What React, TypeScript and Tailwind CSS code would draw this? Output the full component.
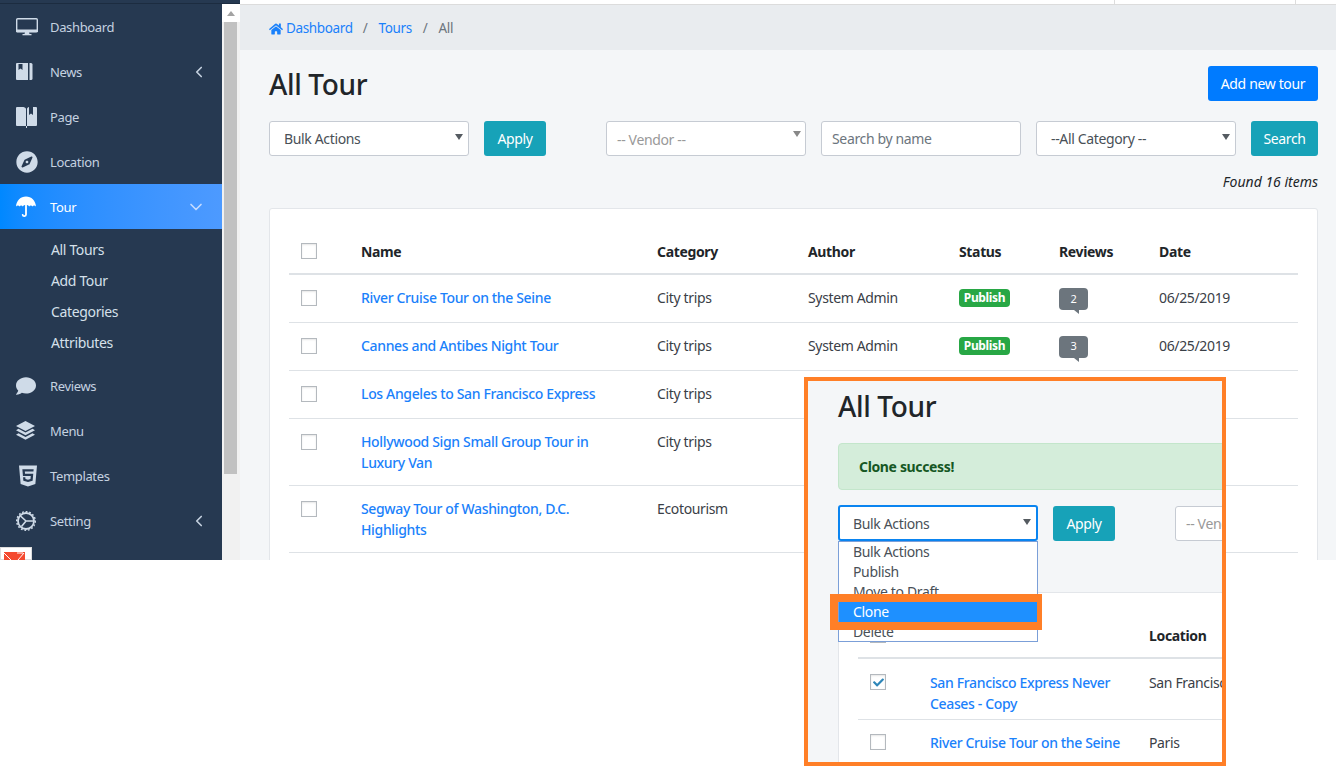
import { ChevronLeft, ChevronDown } from 'lucide-react';
import { FaHome, FaCompass, FaHtml5, FaComment, FaCheck } from 'react-icons/fa';

function DesktopIcon() {
  return (
    <svg width="22" height="18" viewBox="0 0 22 18" className="text-[#cfdbe8]">
      <rect x="0.7" y="0.7" width="20.6" height="13" rx="1" fill="none" stroke="currentColor" strokeWidth="1.4" />
      <rect x="0" y="11.5" width="22" height="2.6" fill="currentColor" />
      <path d="M9 14h4l.5 2.2H8.500z" fill="currentColor" />
      <rect x="6.500" y="16" width="9" height="1.300" fill="currentColor" />
    </svg>
  );
}

function BookIcon() {
  return (
    <svg width="17" height="17" viewBox="0 0 17 17">
      <path d="M1 0h11v17H1a1 1 0 0 1-1-1V1a1 1 0 0 1 1-1z" fill="#cfdbe8" />
      <path d="M2.500 1h4v6L4.500 5.500 2.500 7z" fill="#263951" />
      <path d="M13.500 0H15a1.500 1.500 0 0 1 1.500 1.500v14A1.500 1.500 0 0 1 15 17h-1.500z" fill="#cfdbe8" />
    </svg>
  );
}

function OpenBookIcon() {
  return (
    <svg width="21" height="22" viewBox="0 0 21 22">
      <path d="M1 1h5c2 0 3.800.6 4 2v17H1a1 1 0 0 1-1-1V2a1 1 0 0 1 1-1z" fill="#cfdbe8" />
      <path d="M11 3c.1-1 .9-1.700 2-2v8l2-1.500L17 9V1h3a1 1 0 0 1 1 1v17a1 1 0 0 1-1 1h-9z" fill="#cfdbe8" />
      <rect x="10" y="20" width="1" height="2" fill="#cfdbe8" />
    </svg>
  );
}

function UmbrellaIcon() {
  return (
    <svg width="20" height="22" viewBox="0 0 20 22">
      <path d="M10 0.500C15.500 0.500 19.500 4.500 20 10.500c-1.200-1.400-2.800-1.400-3.500 0-.8-1.400-2.500-1.400-3.300 0-.7-1.300-1.800-1.600-3.200-1.600s-2.500.3-3.200 1.600c-.8-1.400-2.500-1.400-3.300 0-.7-1.400-2.300-1.400-3.500 0C.5 4.500 4.500.5 10 .5z" fill="#fff" />
      <path d="M10 9v9.500c0 2-3 2.200-3.300.3" fill="none" stroke="#fff" strokeWidth="1.800" strokeLinecap="round" />
    </svg>
  );
}

function LayersIcon() {
  return (
    <svg width="19" height="19" viewBox="0 0 19 19" fill="#cfdbe8">
      <path d="M9.500 0l9.500 5-9.500 5L0 5z" />
      <path d="M2.500 7.800l7 3.700 7-3.700 2.500 1.400-9.500 5L0 9.200z" />
      <path d="M2.500 12.300l7 3.700 7-3.700 2.500 1.400-9.500 5L0 13.700z" />
    </svg>
  );
}

function GearIcon() {
  return (
    <svg width="20" height="20" viewBox="0 0 20 20" fill="none" stroke="#cfdbe8">
      <circle cx="10" cy="10" r="8" strokeWidth="1.800" />
      <circle cx="10" cy="10" r="9.300" strokeWidth="1.400" strokeDasharray="1.800 1.800" />
      <path d="M10 10L4.500 5M10 10l7 0M10 10l-4.500 5.500" strokeWidth="1.600" />
    </svg>
  );
}

function Arrow({ color = 'border-t-[#555b61]' }: { color?: string }) {
  return <span className={`block w-0 h-0 border-x-[4px] border-x-transparent border-t-[6px] ${color}`} />;
}

function Checkbox({ checked }: { checked?: boolean }) {
  return (
    <span className="w-4 h-4 border border-[#b4b9be] flex items-center justify-center bg-white shadow-[inset_0_1px_2px_rgba(0,0,0,0.1)]">
      {checked && <FaCheck className="text-[#2e86b8] text-[11px]" />}
    </span>
  );
}

function NavItem({ icon, label, chevron }: { icon: React.ReactNode; label: string; chevron?: boolean }) {
  return (
    <div className="h-[45px] flex items-center text-[#c5d2e0] text-[13px]">
      <span className="w-[50px] pl-4 flex items-center">{icon}</span>
      <span className="flex-1 pt-[3px]">{label}</span>
      {chevron && <ChevronLeft className="w-[18px] h-[18px] mr-[14px]" strokeWidth={2.2} />}
    </div>
  );
}

function Sidebar() {
  return (
    <aside className="relative w-[222px] h-[560px] shrink-0 bg-[#263951] pt-1 overflow-hidden">
      <NavItem icon={<DesktopIcon />} label="Dashboard" />
      <NavItem icon={<BookIcon />} label="News" chevron />
      <NavItem icon={<OpenBookIcon />} label="Page" />
      <NavItem icon={<FaCompass className="text-[22px] text-[#cfdbe8]" />} label="Location" />
      <div className="h-[45px] flex items-center text-white text-[13px] bg-linear-to-r from-[#0088ff] to-[#4d9aff]">
        <span className="w-[50px] pl-4 flex items-center"><UmbrellaIcon /></span>
        <span className="flex-1 pt-[3px]">Tour</span>
        <ChevronDown className="w-5 h-5 mr-4 text-[#c5dcff]" strokeWidth={2} />
      </div>
      <div className="pt-[5px] pb-[5px] pl-[51px] text-[#d5e0ea]">
        <div className="h-[31px] leading-[31px]">All Tours</div>
        <div className="h-[31px] leading-[31px]">Add Tour</div>
        <div className="h-[31px] leading-[31px]">Categories</div>
        <div className="h-[31px] leading-[31px]">Attributes</div>
      </div>
      <NavItem icon={<FaComment className="text-[20px] text-[#cfdbe8]" />} label="Reviews" />
      <NavItem icon={<LayersIcon />} label="Menu" />
      <NavItem icon={<FaHtml5 className="text-[24px] text-[#cfdbe8]" />} label="Templates" />
      <NavItem icon={<GearIcon />} label="Setting" chevron />
      <div className="absolute left-0 top-[547px] w-8 h-[13px] bg-white border border-[#ddd] pl-[3px] pt-1">
        <svg width="21" height="8" viewBox="0 0 21 8">
          <rect width="21" height="8" fill="#f4492f" />
          <path d="M0 1l7 7M14 8l6-7M13 1h6" stroke="#fff" strokeWidth="1" />
        </svg>
      </div>
    </aside>
  );
}

function Scrollbar() {
  return (
    <div className="w-[18px] shrink-0 bg-[#f1f1f1] flex flex-col">
      <div className="h-[22px] bg-white pt-[11px] pl-[5px]">
        <div className="w-0 h-0 border-x-[4px] border-x-transparent border-b-[5px] border-b-[#a3a3a3]" />
      </div>
      <div className="w-[13px] ml-0.5 h-[452px] bg-[#c1c1c1]" />
    </div>
  );
}

function BulkSelect({ focus }: { focus?: boolean }) {
  return (
    <div className={`w-[200px] h-[35px] flex items-center justify-between pr-[5px] bg-white text-[#495057] rounded-[3px] ${focus ? 'h-[36px] pl-[13px] pt-px border-2 border-[#0a84f0]' : 'pl-[14px] border border-[#c6cbd3]'}`}>
      <span>Bulk Actions</span>
      <span className="-mt-1"><Arrow /></span>
    </div>
  );
}

function Badge({ n }: { n: number }) {
  return (
    <div className="relative w-[29px] h-[22px] rounded-[4px] bg-[#6c757d] text-white text-[11px] flex items-center justify-center">
      {n}
      <span className="absolute left-[15px] top-[22px] w-0 h-0 border-l-[5px] border-l-transparent border-t-[4px] border-t-[#6c757d]" />
    </div>
  );
}

const rows = [
  { name: 'River Cruise Tour on the Seine', category: 'City trips', meta: true, n: 2 },
  { name: 'Cannes and Antibes Night Tour', category: 'City trips', meta: true, n: 3 },
  { name: 'Los Angeles to San Francisco Express', category: 'City trips' },
  { name: 'Hollywood Sign Small Group Tour in Luxury Van', category: 'City trips' },
  { name: 'Segway Tour of Washington, D.C. Highlights', category: 'Ecotourism' },
];

function TourTable() {
  return (
    <table className="w-[1009px] table-fixed border-collapse">
      <thead>
        <tr className="h-[45px] border-b-2 border-[#dee2e6] text-left text-[#212529] font-bold">
          <th className="w-[60px] pl-3 align-middle"><Checkbox /></th>
          <th className="w-[296px] pl-3 font-bold">Name</th>
          <th className="w-[151px] pl-3 font-bold">Category</th>
          <th className="w-[151px] pl-3 font-bold">Author</th>
          <th className="w-[100px] pl-3 font-bold">Status</th>
          <th className="w-[100px] pl-3 font-bold">Reviews</th>
          <th className="pl-3 font-bold">Date</th>
        </tr>
      </thead>
      <tbody>
        {rows.map((r) => (
          <tr key={r.name} className="h-[48px] border-b border-[#dee2e6] align-top text-[#3a4047]">
            <td className="pl-3 pt-[15px]"><Checkbox /></td>
            <td className="pl-3 pr-[48px] pt-[12px] pb-[12px] leading-[21px] font-medium text-[#1a81fb]">{r.name}</td>
            <td className="px-3 pt-[12px] leading-[21px]">{r.category}</td>
            <td className="px-3 pt-[12px] leading-[21px]">{r.meta && 'System Admin'}</td>
            <td className="px-3 pt-[12px] leading-[21px]">
              {r.meta && <span className="block w-[51px] h-[18px] mt-[2px] rounded-[4px] bg-[#28a745] text-white text-[12px] font-bold leading-[18px] text-center">Publish</span>}
            </td>
            <td className="px-3 pt-[13px]">{r.n && <Badge n={r.n} />}</td>
            <td className="px-3 pt-[12px] leading-[21px]">{r.meta && '06/25/2019'}</td>
          </tr>
        ))}
      </tbody>
    </table>
  );
}

function CloneCallout() {
  return (
    <div className="absolute left-[804px] top-[377px] w-[422px] h-[389px] border-4 border-[#ff7f27] bg-[#f4f6f8] overflow-hidden">
      <div className="pl-[30px] pt-[8px] w-[800px]">
        <h1 className="text-[28px] leading-[34px] font-medium text-[#212529]">All Tour</h1>
        <div className="mt-[20px] h-[47px] pl-5 flex items-center rounded-[4px] bg-[#d4edda] border border-[#c3e6cb] text-[#155724] font-bold">
          Clone success!
        </div>
        <div className="mt-[15px] h-[36px] flex items-start">
          <BulkSelect focus />
          <div className="ml-[15px] mt-px w-[62px] h-[35px] rounded-[3px] bg-[#17a2b8] text-white flex items-center justify-center">Apply</div>
          <div className="ml-[60px] mt-px w-[200px] h-[35px] pl-[10px] flex items-center bg-white border border-[#c6cbd3] rounded-[3px] text-[#999]">-- Vendor --</div>
        </div>
        <div className="mt-[51px] h-[300px] bg-white border border-[#e3e6ea] pl-[19px] pt-[32px] w-[800px]">
          <div className="h-[34px] border-b-2 border-[#dee2e6] flex">
            <span className="w-[72px] pl-3 pt-0.5"><Checkbox /></span>
            <span className="w-[219px]" />
            <span className="font-bold text-[#212529]">Location</span>
          </div>
          <div className="h-[61px] border-b border-[#dee2e6] flex pt-[13px] leading-[21px]">
            <span className="w-[72px] pl-3 pt-0.5"><Checkbox checked /></span>
            <span className="w-[219px] font-medium text-[#1a81fb] pr-3">San Francisco Express Never Ceases - Copy</span>
            <span className="text-[#3a4047]">San Francisco</span>
          </div>
          <div className="flex pt-[12px] leading-[21px]">
            <span className="w-[72px] pl-3 pt-0.5"><Checkbox /></span>
            <span className="w-[219px] font-medium text-[#1a81fb] whitespace-nowrap">River Cruise Tour on the Seine</span>
            <span className="text-[#3a4047]">Paris</span>
          </div>
        </div>
      </div>
      <div className="absolute left-[30px] top-[160px] w-[200px] h-[101px] bg-white border border-[#7b9fd8] text-[#495057] leading-5">
        <div className="h-5 pl-[14px]">Bulk Actions</div>
        <div className="h-5 pl-[14px]">Publish</div>
        <div className="h-5 pl-[14px]">Move to Draft</div>
        <div className="h-5 pl-[14px] bg-[#1e90ff] text-white">Clone</div>
        <div className="h-5 pl-[14px]">Delete</div>
      </div>
      <div className="absolute left-[22px] top-[213px] w-[212px] h-9 border-y-8 border-l-8 border-r-[5px] border-[#ff7f27]" />
    </div>
  );
}

export default function App() {
  return (
    <div className="relative w-[1336px] h-[781px] overflow-hidden bg-white font-['Noto_Sans',sans-serif] text-[14px] tracking-[-0.025em]">
      <div className="flex h-[560px] overflow-hidden">
        <Sidebar />
        <Scrollbar />
        <main className="flex-1 bg-[#f4f6f8] min-w-0">
          <div className="h-[5px] bg-white border-b border-[#dcdcdc] relative">
            <span className="absolute left-[874px] top-0 w-px h-1 bg-[#ddd]" />
            <span className="absolute left-[1055px] top-0 w-px h-1 bg-[#ddd]" />
          </div>
          <nav className="h-[45px] bg-[#e9ecef] pl-[29px] pt-0.5 flex items-center text-[#6c757d] text-[13.5px]">
            <FaHome className="text-[#1a81fb] text-[14px] mr-[3px]" />
            <span className="text-[#1a81fb]">Dashboard</span>
            <span className="ml-[10px] mr-[11px]">/</span>
            <span className="text-[#1a81fb]">Tours</span>
            <span className="mx-[11px]">/</span>
            <span>All</span>
          </nav>
          <div className="pl-[29px] pr-[18px]">
            <div className="flex items-start justify-between pt-4">
              <h1 className="text-[28px] leading-[36px] font-medium text-[#212529]">All Tour</h1>
              <div className="w-[110px] h-[35px] rounded-[3px] bg-[#007bff] text-white flex items-center justify-center">Add new tour</div>
            </div>
            <div className="mt-[19px] flex">
              <BulkSelect />
              <div className="ml-[15px] w-[62px] h-[35px] rounded-[3px] bg-[#17a2b8] text-white flex items-center justify-center">Apply</div>
              <div className="ml-[60px] w-[200px] h-[35px] flex items-center justify-between pl-[10px] pr-[4px] bg-white border border-[#c6cbd3] rounded-[3px] text-[#999]">
                <span className="pt-0.5">-- Vendor --</span>
                <span className="-mt-2.5"><Arrow color="border-t-[#888]" /></span>
              </div>
              <input placeholder="Search by name" className="ml-[15px] w-[200px] h-[35px] pl-[10px] bg-white border border-[#c6cbd3] rounded-[3px] text-[#495057] placeholder:text-[#6c757d]" />
              <div className="ml-[15px] w-[200px] h-[35px] flex items-center justify-between pl-[14px] pr-[5px] bg-white border border-[#c6cbd3] rounded-[3px] text-[#495057]">
                <span>--All Category --</span>
                <span className="-mt-1"><Arrow /></span>
              </div>
              <div className="ml-[15px] w-[67px] h-[35px] rounded-[3px] bg-[#17a2b8] text-white flex items-center justify-center">Search</div>
            </div>
            <div className="mt-[15px] h-[22px] text-right italic tracking-normal text-[#212529]">Found 16 items</div>
            <section className="mt-[15px] w-[1049px] bg-white border border-[#e3e6ea] rounded-[3px] px-[19px] pt-5 h-[400px]">
              <TourTable />
            </section>
          </div>
        </main>
      </div>
      <div className="absolute left-0 top-0 w-[240px] h-1 bg-[#263951] border-b border-[#1c2c40]" />
      <CloneCallout />
    </div>
  );
}
